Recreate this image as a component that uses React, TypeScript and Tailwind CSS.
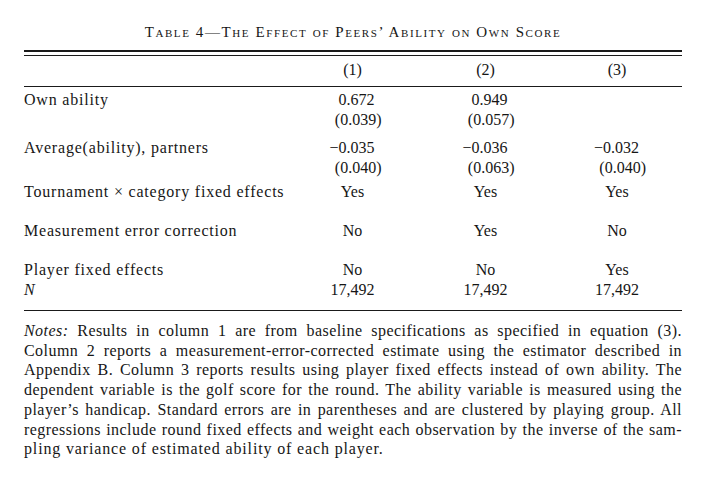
const rows = [
  { label: 'Own ability', vals: ['0.672', '0.949', ''], ses: ['(0.039)', '(0.057)', ''] },
  { label: 'Average(ability), partners', vals: ['\u22120.035', '\u22120.036', '\u22120.032'], ses: ['(0.040)', '(0.063)', '(0.040)'] },
];

const flags = [
  { label: 'Tournament \u00d7 category fixed effects', vals: ['Yes', 'Yes', 'Yes'], gap: 'mt-[4px]' },
  { label: 'Measurement error correction', vals: ['No', 'Yes', 'No'], gap: 'mt-[19px]' },
  { label: 'Player fixed effects', vals: ['No', 'No', 'Yes'], gap: 'mt-[19px]' },
];

const notes = [
  'Results in column 1 are from baseline specifications as specified in equation (3).',
  'Column 2 reports a measurement-error-corrected estimate using the estimator described in',
  'Appendix B. Column 3 reports results using player fixed effects instead of own ability. The',
  'dependent variable is the golf score for the round. The ability variable is measured using the',
  "player\u2019s handicap. Standard errors are in parentheses and are clustered by playing group. All",
  'regressions include round fixed effects and weight each observation by the inverse of the sam-',
  'pling variance of estimated ability of each player.',
];

function Num({ v, se }: { v: string; se?: boolean }) {
  return (
    <div className="flex justify-center">
      <span className={`w-[58px] text-right ${se ? '' : 'pr-[7px]'}`}>{v}</span>
    </div>
  );
}

export default function App() {
  return (
    <div className="w-[726px] h-[481px] bg-white text-[#161616] font-['Liberation_Serif','Times_New_Roman',serif] text-[16px] leading-[20px]">
      <div className="ml-[24px] w-[658px] pt-[22px]">
        <div className="text-center text-[15px] [font-variant:small-caps] tracking-[1.6px]">
          Table 4—The Effect of Peers’ Ability on Own Score
        </div>

        <div className="mt-[8px] h-[2px] bg-[#1a1a1a]" />
        <div className="mt-[3px] h-px bg-[#1a1a1a]" />

        <div className="mt-[4px] grid grid-cols-[262px_133px_133px_130px]">
          <div />
          <div className="text-center">(1)</div>
          <div className="text-center">(2)</div>
          <div className="text-center">(3)</div>
        </div>
        <div className="mt-[6px] h-px bg-[#1a1a1a]" />

        <div className="mt-[3px]">
          {rows.map((r, i) => (
            <div key={r.label} className={`grid grid-cols-[262px_133px_133px_130px] ${i > 0 ? 'mt-[8px]' : ''}`}>
              <div className="whitespace-nowrap tracking-[0.8px]">{r.label}</div>
              {r.vals.map((v, j) => (
                <Num key={j} v={v} />
              ))}
              <div />
              {r.ses.map((v, j) => (
                <Num key={j} v={v} se />
              ))}
            </div>
          ))}

          {flags.map((f) => (
            <div key={f.label} className={`grid grid-cols-[262px_133px_133px_130px] ${f.gap}`}>
              <div className="whitespace-nowrap tracking-[0.8px]">{f.label}</div>
              {f.vals.map((v, j) => (
                <div key={j} className="text-center">{v}</div>
              ))}
            </div>
          ))}

          <div className="grid grid-cols-[262px_133px_133px_130px]">
            <div className="italic">N</div>
            {['17,492', '17,492', '17,492'].map((v, j) => (
              <div key={j} className="text-center">{v}</div>
            ))}
          </div>
        </div>

        <div className="mt-[10px] h-px bg-[#1a1a1a]" />

        <div className="mt-[10px] leading-[19.7px]">
          {notes.map((line, i) => {
            const last = i === notes.length - 1;
            return (
              <div
                key={i}
                className={
                  last
                    ? 'tracking-[0.85px]'
                    : 'text-justify [text-align-last:justify] tracking-[0.45px] [word-spacing:-1.5px]'
                }
              >
                {i === 0 && <span className="italic">Notes:</span>} {line}
              </div>
            );
          })}
        </div>
      </div>
    </div>
  );
}
